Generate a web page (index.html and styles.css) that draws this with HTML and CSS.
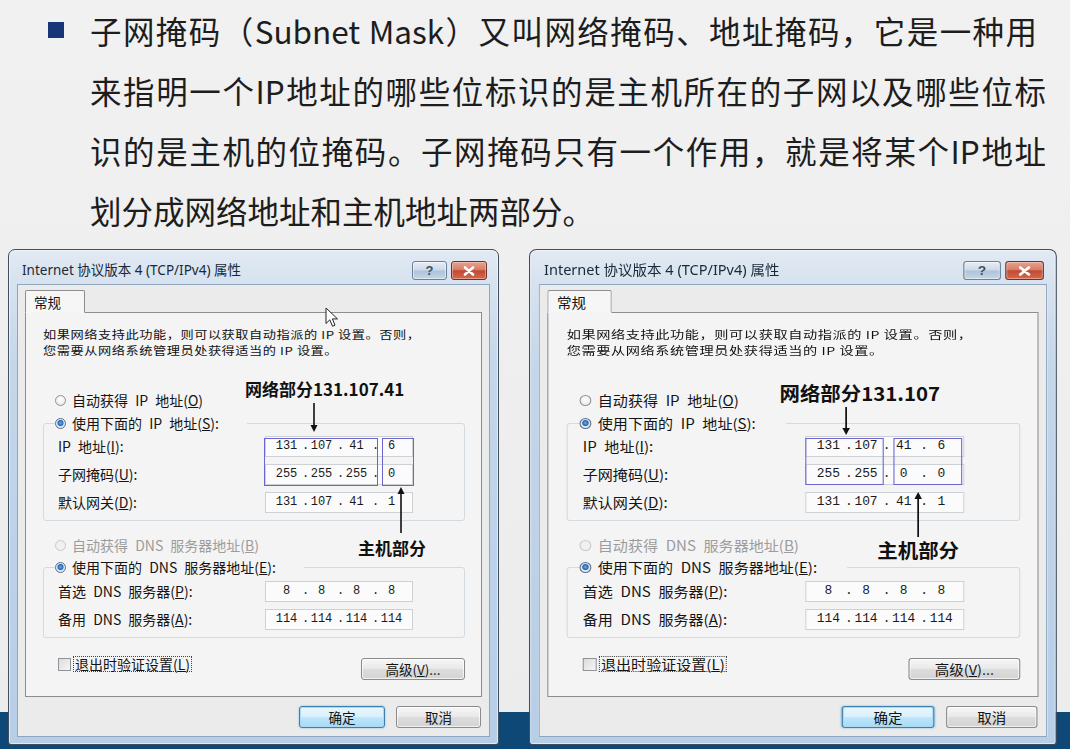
FILE: index.html
```html
<!DOCTYPE html>
<html lang="zh-CN">
<head>
<meta charset="utf-8">
<title>子网掩码</title>
<link rel="stylesheet" href="styles.css">
</head>
<body>
<div class="slide">
  <section class="intro">
    <span class="bullet"></span>
    <div class="para">
      <span class="ln ln1">子网掩码（Subnet Mask）又叫网络掩码、地址掩码，它是一种用</span>
      <span class="ln">来指明一个IP地址的哪些位标识的是主机所在的子网以及哪些位标</span>
      <span class="ln">识的是主机的位掩码。子网掩码只有一个作用，就是将某个IP地址</span>
      <span class="ln last">划分成网络地址和主机地址两部分。</span>
    </div>
  </section>

  <section class="stage">
    <div class="footer-bar"></div>
    <div class="dialogs">

      <!-- Dialog 1 -->
      <div class="dialog">
        <div class="titlebar">
          <span class="title">Internet 协议版本 4 (TCP/IPv4) 属性</span>
          <span class="tb-btn help">?</span>
          <span class="tb-btn close"><svg width="14" height="10" viewBox="0 0 14 10"><path d="M3 1.5 L11 8.5 M11 1.5 L3 8.5" stroke="#fff" stroke-width="2.6" stroke-linecap="round"/></svg></span>
        </div>
        <div class="client">
          <div class="tabs"><span class="tab">常规</span></div>
          <div class="panel">
            <div class="desc"><span class="dl">如果网络支持此功能，则可以获取自动指派的 IP 设置。否则，</span><span class="dl">您需要从网络系统管理员处获得适当的 IP 设置。</span></div>
            <div class="opt first"><span class="radio"></span>自动获得 IP 地址(<u>O</u>)</div>
            <div class="group g-ip">
              <div class="opt glabel"><span class="radio on"></span>使用下面的 IP 地址(<u>S</u>):</div>
              <div class="row"><span class="lbl">IP 地址(<u>I</u>):</span><span class="ipbox"><span>131</span><i>.</i><span>107</span><i>.</i><span>41</span><i>.</i><span>6</span></span></div>
              <div class="row"><span class="lbl">子网掩码(<u>U</u>):</span><span class="ipbox"><span>255</span><i>.</i><span>255</span><i>.</i><span>255</span><i>.</i><span>0</span></span></div>
              <div class="row"><span class="lbl">默认网关(<u>D</u>):</span><span class="ipbox"><span>131</span><i>.</i><span>107</span><i>.</i><span>41</span><i>.</i><span>1</span></span></div>
            </div>
            <div class="opt dis"><span class="radio off"></span>自动获得 DNS 服务器地址(<u>B</u>)</div>
            <div class="group g-dns">
              <div class="opt glabel"><span class="radio on"></span>使用下面的 DNS 服务器地址(<u>E</u>):</div>
              <div class="row"><span class="lbl">首选 DNS 服务器(<u>P</u>):</span><span class="ipbox"><span>8</span><i>.</i><span>8</span><i>.</i><span>8</span><i>.</i><span>8</span></span></div>
              <div class="row"><span class="lbl">备用 DNS 服务器(<u>A</u>):</span><span class="ipbox"><span>114</span><i>.</i><span>114</span><i>.</i><span>114</span><i>.</i><span>114</span></span></div>
            </div>
            <div class="bottom-row">
              <span class="chk"><span class="box"></span><span class="focus">退出时验证设置(<u>L</u>)</span></span>
              <span class="btn adv">高级(<u>V</u>)...</span>
            </div>
          </div>
          <div class="actions"><span class="btn ok">确定</span><span class="btn cancel">取消</span></div>
        </div>

        <span class="mark mk1-a"></span>
        <span class="mark mk1-b"></span>
        <span class="note net1">网络部分131.107.41</span>
        <svg class="arrow dn1" width="10" height="29" viewBox="0 0 10 29"><path d="M5 0 V23" stroke="#111" stroke-width="1.6"/><path d="M1.5 22 L8.5 22 L5 29 Z" fill="#111"/></svg>
        <span class="note host1">主机部分</span>
        <svg class="arrow up1" width="10" height="46" viewBox="0 0 10 46"><path d="M5 6 V46" stroke="#111" stroke-width="1.6"/><path d="M1.5 7 L8.5 7 L5 0 Z" fill="#111"/></svg>
        <svg class="cursor" width="14" height="21" viewBox="0 0 14 21"><path d="M1 1 L1 16.5 L4.8 12.8 L7.5 19.2 L10 18.1 L7.4 11.9 L12.5 11.9 Z" fill="#fff" stroke="#222" stroke-width="1" stroke-linejoin="round"/></svg>
      </div>

      <!-- Dialog 2 -->
      <div class="dialog wide">
        <div class="titlebar">
          <span class="title">Internet 协议版本 4 (TCP/IPv4) 属性</span>
          <span class="tb-btn help">?</span>
          <span class="tb-btn close"><svg width="14" height="10" viewBox="0 0 14 10"><path d="M3 1.5 L11 8.5 M11 1.5 L3 8.5" stroke="#fff" stroke-width="2.6" stroke-linecap="round"/></svg></span>
        </div>
        <div class="client">
          <div class="tabs"><span class="tab">常规</span></div>
          <div class="panel">
            <div class="desc"><span class="dl">如果网络支持此功能，则可以获取自动指派的 IP 设置。否则，</span><span class="dl">您需要从网络系统管理员处获得适当的 IP 设置。</span></div>
            <div class="opt first"><span class="radio"></span>自动获得 IP 地址(<u>O</u>)</div>
            <div class="group g-ip">
              <div class="opt glabel"><span class="radio on"></span>使用下面的 IP 地址(<u>S</u>):</div>
              <div class="row"><span class="lbl">IP 地址(<u>I</u>):</span><span class="ipbox"><span>131</span><i>.</i><span>107</span><i>.</i><span>41</span><i>.</i><span>6</span></span></div>
              <div class="row"><span class="lbl">子网掩码(<u>U</u>):</span><span class="ipbox"><span>255</span><i>.</i><span>255</span><i>.</i><span>0</span><i>.</i><span>0</span></span></div>
              <div class="row"><span class="lbl">默认网关(<u>D</u>):</span><span class="ipbox"><span>131</span><i>.</i><span>107</span><i>.</i><span>41</span><i>.</i><span>1</span></span></div>
            </div>
            <div class="opt dis"><span class="radio off"></span>自动获得 DNS 服务器地址(<u>B</u>)</div>
            <div class="group g-dns">
              <div class="opt glabel"><span class="radio on"></span>使用下面的 DNS 服务器地址(<u>E</u>):</div>
              <div class="row"><span class="lbl">首选 DNS 服务器(<u>P</u>):</span><span class="ipbox"><span>8</span><i>.</i><span>8</span><i>.</i><span>8</span><i>.</i><span>8</span></span></div>
              <div class="row"><span class="lbl">备用 DNS 服务器(<u>A</u>):</span><span class="ipbox"><span>114</span><i>.</i><span>114</span><i>.</i><span>114</span><i>.</i><span>114</span></span></div>
            </div>
            <div class="bottom-row">
              <span class="chk"><span class="box"></span><span class="focus">退出时验证设置(<u>L</u>)</span></span>
              <span class="btn adv">高级(<u>V</u>)...</span>
            </div>
          </div>
          <div class="actions"><span class="btn ok">确定</span><span class="btn cancel">取消</span></div>
        </div>

        <span class="mark mk2-a"></span>
        <span class="mark mk2-b"></span>
        <span class="note big net2">网络部分131.107</span>
        <svg class="arrow dn2" width="10" height="28" viewBox="0 0 10 28"><path d="M5 0 V22" stroke="#111" stroke-width="1.6"/><path d="M1.5 21 L8.5 21 L5 28 Z" fill="#111"/></svg>
        <span class="note big host2">主机部分</span>
        <svg class="arrow up2" width="10" height="45" viewBox="0 0 10 45"><path d="M5 6 V45" stroke="#111" stroke-width="1.6"/><path d="M1.5 7 L8.5 7 L5 0 Z" fill="#111"/></svg>
      </div>

    </div>
  </section>
</div>
</body>
</html>
```

FILE: styles.css
```css
* { box-sizing: border-box; }

html, body {
  margin: 0;
  padding: 0;
}

body {
  background: #eeeeee;
  font-family: "Noto Sans CJK SC", "Noto Sans", sans-serif;
}

.slide {
  width: 1070px;
  height: 749px;
  overflow: hidden;
  background: linear-gradient(180deg, #f1f1f1 0%, #ececec 100%);
  display: flex;
  flex-direction: column;
}

/* ---------- intro paragraph ---------- */
.intro {
  height: 249px;
  flex: none;
  display: flex;
  align-items: flex-start;
}

.bullet {
  flex: none;
  width: 16px;
  height: 16px;
  background: #173577;
  margin: 22px 0 0 48px;
}

.para {
  width: 956px;
  margin-left: 26px;
  font-family: "Noto Sans CJK SC", sans-serif;
  font-size: 31.5px;
  line-height: 60px;
  color: #1d1d1d;
}

.ln {
  display: block;
  text-align: justify;
  text-align-last: justify;
}

.ln1 { margin-right: 9px; }

.ln.last {
  text-align: left;
  text-align-last: left;
}

/* ---------- stage ---------- */
.stage {
  flex: 1;
  display: grid;
}

.footer-bar {
  grid-area: 1 / 1;
  align-self: end;
  height: 37px;
  background: #0e4877;
}

.dialogs {
  grid-area: 1 / 1;
  display: flex;
  align-items: flex-start;
  padding-left: 8px;
  gap: 30px;
}

/* ---------- dialog frame ---------- */
.dialog {
  position: relative;
  flex: none;
  width: 491px;
  height: 496px;
  display: flex;
  flex-direction: column;
  padding: 0 8px 7px 8px;
  border: 1px solid #3f4d5c;
  border-radius: 7px 7px 3px 3px;
  background: linear-gradient(180deg, #e2eaf3 0px, #d6e2ef 34px, #c3d6ea 120px, #b7cee7 100%);
  box-shadow: inset 0 0 0 1px rgba(255, 255, 255, 0.55);
  font-family: "Noto Sans CJK SC", sans-serif;
  color: #141414;
}

.dialog.wide {
  transform: scaleX(1.075);
  transform-origin: 0 0;
}

.titlebar {
  height: 34px;
  flex: none;
  display: flex;
  align-items: flex-start;
  padding: 0 3px 0 5px;
  gap: 4px;
}

.title {
  flex: 1;
  margin-top: 10px;
  font-family: "Noto Sans", "Noto Sans CJK SC", sans-serif;
  font-size: 13.5px;
  line-height: 20px;
  color: #1a2838;
  white-space: nowrap;
}

.tb-btn {
  margin-top: 11px;
  height: 19px;
  border-radius: 3px;
  display: flex;
  align-items: center;
  justify-content: center;
  flex: none;
}

.help {
  width: 35px;
  border: 1px solid #6c7f93;
  background: linear-gradient(180deg, #e7eef6 0%, #cbd9e8 48%, #aec3d9 52%, #c4d6e8 100%);
  font-family: "Liberation Sans", sans-serif;
  font-weight: bold;
  font-size: 13px;
  color: #3f4e5e;
  box-shadow: inset 0 0 0 1px rgba(255, 255, 255, 0.5);
}

.close {
  width: 36px;
  border: 1px solid #6d3329;
  background: linear-gradient(180deg, #e6a493 0%, #d77c65 45%, #c24a32 52%, #d36a4f 100%);
  box-shadow: inset 0 0 0 1px rgba(255, 220, 210, 0.45);
}

.client {
  flex: 1;
  display: flex;
  flex-direction: column;
  background: #ebebeb;
  border: 1px solid #8fa6bf;
  padding: 5px 7px 0 7px;
}

.tabs {
  display: flex;
  position: relative;
  z-index: 1;
  margin-bottom: -1px;
}

.tab {
  width: 60px;
  height: 23px;
  padding-left: 8px;
  font-size: 13.5px;
  line-height: 22px;
  background: #f6f6f6;
  border: 1px solid #8b8d90;
  border-bottom-color: #f6f6f6;
  border-radius: 2px 2px 0 0;
}

.panel {
  height: 385px;
  flex: none;
  border: 1px solid #8b8d90;
  background: #f4f4f4;
  padding: 13px 16px 0 17px;
  display: flex;
  flex-direction: column;
}

.desc {
  display: flex;
  flex-direction: column;
  color: #111;
}

.dl {
  display: block;
  height: 16px;
  font-size: 11px;
  line-height: 16px;
  letter-spacing: 0.45px;
  white-space: nowrap;
  transform: scaleX(1.2);
  transform-origin: 0 50%;
}

.opt {
  display: flex;
  align-items: center;
  height: 22px;
  font-size: 14px;
  word-spacing: 4px;
  white-space: nowrap;
}

.opt.first {
  margin-top: 31px;
  margin-left: 12px;
}

.opt.dis {
  margin-top: 13px;
  margin-left: 12px;
  color: #9c9c9c;
}

.radio {
  width: 11px;
  height: 11px;
  border-radius: 50%;
  border: 1px solid #8e9297;
  background: radial-gradient(circle at 50% 40%, #ffffff 0%, #e3e3e3 100%);
  margin-right: 6px;
  flex: none;
}

.radio.on {
  background: radial-gradient(circle at 50% 45%, #6fb0ee 0%, #2565b3 38%, #d8e6f4 52%, #f4f4f4 100%);
  border-color: #5d6e84;
}

.radio.off {
  border-color: #c9c9c9;
  background: #f0f0f0;
}

.group {
  margin-top: 12px;
  border: 1px solid #d3dbe1;
  border-radius: 3px;
  padding: 0 0 4px 14px;
}

.g-dns { margin-top: 11px; }

.glabel {
  margin-top: -11px;
  margin-left: -3px;
  height: 20px;
  width: fit-content;
  background: #f4f4f4;
  padding-right: 28px;
}

.g-ip .glabel + .row { margin-top: -1px; }

.row {
  display: flex;
  align-items: center;
  height: 28px;
}

.lbl {
  width: 207px;
  font-size: 14px;
  word-spacing: 4px;
  white-space: nowrap;
}

.ipbox {
  width: 148px;
  height: 21px;
  display: flex;
  align-items: center;
  padding: 0 5px;
  background: #fbfbfb;
  border: 1px solid #cdd1d6;
  font-family: "Liberation Mono", monospace;
  font-size: 12px;
  color: #1a1a1a;
}

.ipbox span {
  flex: 1;
  text-align: center;
}

.ipbox i {
  font-style: normal;
  width: 4px;
  text-align: center;
}

.bottom-row {
  display: flex;
  align-items: flex-start;
  justify-content: space-between;
  margin-top: 18px;
  padding-left: 15px;
}

.chk {
  display: flex;
  align-items: center;
  height: 16px;
  font-size: 14px;
}

.chk .box {
  width: 13px;
  height: 13px;
  border: 1px solid #8f9398;
  background: linear-gradient(135deg, #dcdcdc, #f6f6f6);
  margin-right: 2px;
}

.chk .focus {
  border: 1px dotted #444;
  padding: 0 1px;
  line-height: 14px;
}

.btn {
  display: flex;
  align-items: center;
  justify-content: center;
  height: 22px;
  font-size: 13.5px;
  border: 1px solid #8a8a8a;
  border-radius: 3px;
  background: linear-gradient(180deg, #f6f6f6 0%, #e9e9e9 48%, #dcdcdc 52%, #d3d3d3 100%);
  box-shadow: inset 0 0 0 1px rgba(255, 255, 255, 0.7);
  white-space: nowrap;
}

.btn.adv {
  width: 104px;
  margin-top: 2px;
}

.actions {
  display: flex;
  justify-content: flex-end;
  gap: 11px;
  margin-top: 9px;
  padding-right: 1px;
}

.btn.ok {
  width: 86px;
  border-color: #3c7fb1;
  background: linear-gradient(180deg, #eaf6fd 0%, #d9f0fc 48%, #bee6fd 52%, #a7d9f5 100%);
  box-shadow: inset 0 0 0 1px #a9dcf4, 0 0 2px #7ab4dc;
}

.btn.cancel { width: 85px; }

/* ---------- annotations ---------- */
.mark {
  position: absolute;
  border: 1.5px solid #6a66cf;
}

.mk1-a { left: 255px; top: 188px; width: 114px; height: 48px; }
.mk1-b { left: 373px; top: 188px; width: 32px; height: 48px; }
.mk2-a { left: 256px; top: 188px; width: 73px; height: 47px; }
.mk2-b { left: 338px; top: 188px; width: 64px; height: 47px; }

.note {
  position: absolute;
  font-family: "Noto Sans CJK SC", "Liberation Sans", sans-serif;
  font-weight: bold;
  font-size: 17px;
  line-height: 24px;
  color: #111;
  white-space: nowrap;
}

.note.big {
  font-size: 19px;
  line-height: 26px;
}

.net1 { left: 236px; top: 127px; }
.host1 { left: 349px; top: 286px; }
.net2 { left: 232px; top: 130px; }
.host2 { left: 323px; top: 287px; }

.arrow { position: absolute; }
.dn1 { left: 300px; top: 153px; }
.up1 { left: 387px; top: 237px; }
.dn2 { left: 289px; top: 157px; }
.up2 { left: 356px; top: 242px; }

.cursor {
  position: absolute;
  left: 316px;
  top: 57px;
}
```
